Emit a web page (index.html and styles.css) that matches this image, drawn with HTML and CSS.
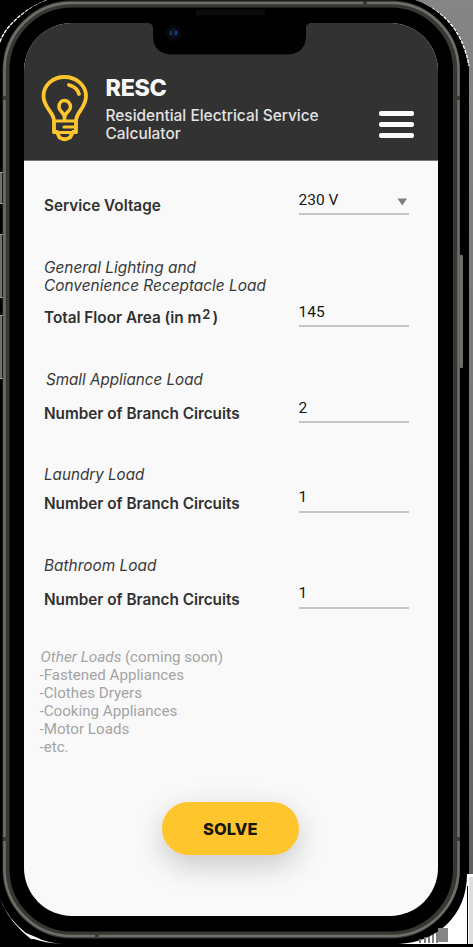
FILE: index.html
```html
<!DOCTYPE html>
<html lang="en">
<head>
<meta charset="utf-8">
<title>RESC</title>
<link rel="stylesheet" href="styles.css">
</head>
<body>
<div class="device">
  <svg class="frame" width="473" height="947" viewBox="0 0 473 947" aria-hidden="true">
    <defs>
      <linearGradient id="side" x1="0" y1="0" x2="0" y2="1"><stop offset="0" stop-color="#858585"/><stop offset=".5" stop-color="#777"/><stop offset="1" stop-color="#606060"/></linearGradient>
    </defs>
    <rect width="473" height="947" fill="#000"/>
    <path d="M412 0H473V874H469V67C465 31 443 8 412 0Z" fill="url(#side)"/>
    <path d="M0 42C5 27 22 10 48 0M413 0C443 9 463 31 469 66" fill="none" stroke="#fff" stroke-width="1.400" stroke-dasharray="4 1"/>
    <path d="M469 874H473V944H399C437 942 467 916 467 874Z" fill="#fff"/>
    <path d="M469 877H473V944H469Z" fill="#ddd"/>
    <path d="M467.500 886V944" stroke="#000"/>
    <path d="M438 928H448V942H438Z" fill="#858585"/>
    <path d="M437 927V943M433 930V943M429 934V943" stroke="#000"/>
    <path d="M425 937V943M420 939V943" stroke="#777" stroke-width="2"/>
    <rect x="5" y="4" width="452" height="932" rx="66" fill="#000"/>
    <rect x="1.500" y="0" width="460" height="939" rx="69" fill="none" stroke="#000" stroke-width="7"/>
    <path d="M0 899Q8 919 26 933L38 938Q45 942 62 944Q45 943 34 939H31Q9 922 0 899Z" fill="#fff"/>
    <rect x="6" y="4" width="450.500" height="931" rx="66" fill="none" stroke="#373733" stroke-width="7"/>
    <rect x="4.500" y="3" width="454" height="933" rx="67" fill="none" stroke="#6f6e68" stroke-width="2.500"/>
    <path d="M0 172H2V203H0ZM0 234H2V297H0ZM0 315H2V378H0Z" fill="#6f6f6b"/>
    <path d="M0 172.500H3M0 203.500H3M0 234.500H3M0 297.500H3M0 315.500H3M0 378.500H3" stroke="#999"/>
    <rect x="459.500" y="255" width="3.500" height="113" rx="1" fill="#6d6d69"/>
    <path d="M3 98H9M453 98H460M365 1V7M453 839H460M3 839H9M97 932V937" stroke="#3a3a35" stroke-width="4"/>
    <path d="M196 12.500H265" stroke="#0b0b0b" stroke-width="6"/>
  </svg>
  <main class="screen">
    <header class="header">
      <svg class="notch" width="157" height="33" viewBox="0 0 157 33" aria-hidden="true">
        <path d="M-3 0Q1 1 1 6V12Q1 31.500 21 31.500H134Q154 31.500 154 12V5Q154 1 158 0Z" fill="#000"/>
        <circle cx="21.500" cy="10" r="8" fill="#08080b"/>
        <circle cx="21.500" cy="10" r="5" fill="#0b1020"/>
        <ellipse cx="19" cy="10" rx="1.300" ry="2.500" fill="#153f3c"/>
        <ellipse cx="24" cy="10" rx="1.500" ry="2.500" fill="#153a85"/>
      </svg>
      <svg class="bulb" width="48" height="70" viewBox="0 0 48 70" fill="none" stroke="#ffc52d" stroke-width="3.800" stroke-linecap="round" stroke-linejoin="round" aria-hidden="true">
        <path d="M13 48C13 39 2.500 35 2.500 23C2.500 12 12 4 23.500 4S45 12 45 23C45 35 35 39 35 48V59H32L29 64.500Q23.500 68 18.500 64.500L16 59H13Z"/>
        <path d="M28 12Q36 14 38 21"/>
        <path d="M23.500 46C24 39 18 39 18 34C18 30 20.500 27.500 23.500 27.500S29.500 30 29.500 34C29.500 39 23 39 23.500 46" stroke-width="3.500"/>
        <path d="M13 48H35M23 54H34M13 59.500H35" stroke-width="3"/>
      </svg>
      <div class="brand">
        <h1>RESC</h1>
        <p>Residential Electrical Service<br>Calculator</p>
      </div>
      <div class="menu"><i></i><i></i><i></i></div>
    </header>
    <form class="form">
      <div class="field voltage"><label>Service Voltage</label><div class="value select">230 V<svg width="11" height="8" viewBox="0 0 11 8"><path d="M.5 .5H10L5.250 7.500Z" fill="#808080"/></svg></div></div>
      <h2 class="general">General Lighting and<br>Convenience Receptacle Load</h2>
      <div class="field area"><label>Total Floor Area (in m<span class="square">2</span>)</label><div class="value">145</div></div>
      <h2 class="small">Small Appliance Load</h2>
      <div class="field appliance"><label>Number of Branch Circuits</label><div class="value">2</div></div>
      <h2 class="laundry">Laundry Load</h2>
      <div class="field laundry-field"><label>Number of Branch Circuits</label><div class="value low">1</div></div>
      <h2 class="bathroom">Bathroom Load</h2>
      <div class="field bathroom-field"><label>Number of Branch Circuits</label><div class="value low">1</div></div>
    </form>
    <section class="other">
      <p><em>Other Loads</em>(coming soon)</p>
      <p>-Fastened Appliances</p><p>-Clothes Dryers</p><p>-Cooking Appliances</p><p>-Motor Loads</p><p>-etc.</p>
    </section>
    <div class="action"><div class="solve">SOLVE</div></div>
  </main>
</div>
</body>
</html>
```
FILE: styles.css
```css
* { box-sizing: border-box; }
body { margin: 0; background: #000; font-family: Inter, sans-serif; }
h1, h2, p { margin: 0; }
.device { position: relative; width: 473px; height: 947px; padding: 22.5px 35.5px 0 24px; overflow: hidden; }
.frame { position: absolute; left: 0; top: 0; }
.screen { position: relative; height: 893px; border-radius: 48px; background: #f9f9f9; overflow: hidden; }
.header { position: relative; display: flex; height: 138px; padding: 50.5px 23.5px 0 17px; background: #323232; border-bottom: 1px solid #777; }
.notch { position: absolute; left: 128px; top: 0; overflow: visible; }
.bulb { flex: none; }
.brand { width: 240px; margin-left: 16.500px; color: #f8f8f8; }
.brand h1 { margin-top: 1px; font-size: 23.300px; line-height: 28px; font-weight: 800; letter-spacing: -.3px; }
.brand p { margin-top: 4.500px; font-size: 15.450px; line-height: 18px; font-weight: 500; white-space: nowrap; color: #e3e3e3; }
.menu { display: flex; flex-direction: column; gap: 6px; margin: 38px 0 0 auto; }
.menu i { width: 35px; height: 5px; border-radius: 2px; background: #fafafa; }
.form { padding: 36.300px 0 0 20px; color: #303030; }
.field { display: grid; grid-template-columns: 254.500px 110px; align-items: end; height: 18px; }
label { font-size: 15.300px; line-height: 18px; font-weight: 600; white-space: nowrap; }
.square { position: relative; top: -4px; margin: 0 2px 0 1px; font-size: 13px; line-height: 1px; }
h2 { font-size: 15.400px; line-height: 18px; font-weight: 400; font-style: italic; white-space: nowrap; color: #383838; }
.value { height: 27px; margin-top: -9px; border-bottom: 2px solid #c6c6c6; color: #171717; font: 15.500px/25px Roboto, sans-serif; }
.value.low { height: 28px; margin-top: -10px; }
.select { display: flex; justify-content: space-between; }
.select svg { margin: 10.500px 1px 0 0; }
.general { margin-top: 44px; }
.area { margin-top: 14.500px; }
.small { margin: 43.500px 0 0 2px; font-size: 15.200px; }
.appliance { margin-top: 16px; }
.laundry { margin-top: 43.500px; font-size: 15.200px; }
.laundry-field { margin-top: 11px; }
.bathroom { margin-top: 44px; }
.bathroom-field { margin-top: 15.500px; }
.other { margin: 39px 0 0 15.500px; color: #a4a4a4; font: 15.150px/18.100px Roboto, sans-serif; white-space: nowrap; }
.other em { margin: 0 3.500px 0 1px; font-size: 15.400px; }
.action { margin: 46px 0 0 137.500px; }
.solve { display: flex; width: 137.500px; height: 52.500px; align-items: center; justify-content: center; border-radius: 27px; background: #ffc52d; color: #17170d; font-size: 16.500px; font-weight: 800; box-shadow: 0 10px 30px #0003; }
```
